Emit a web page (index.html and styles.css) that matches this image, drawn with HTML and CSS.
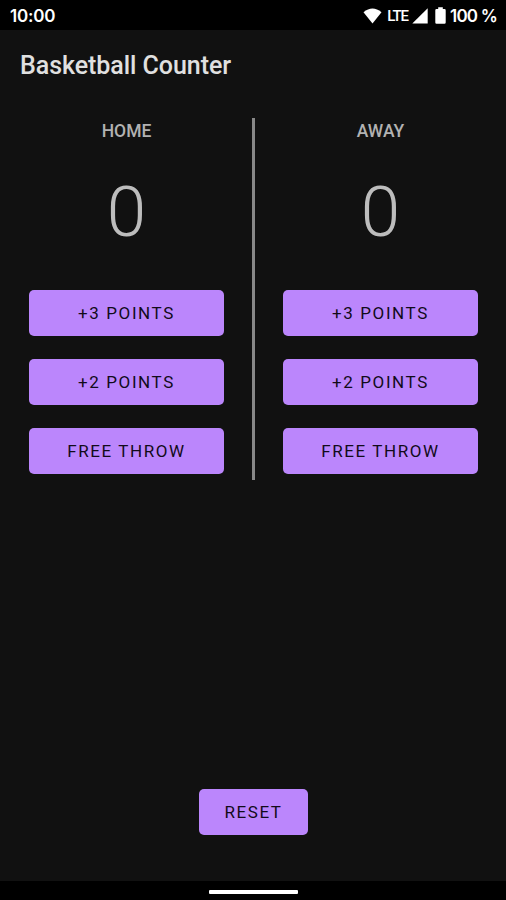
FILE: index.html
```
<!DOCTYPE html>
<html lang="en">
<head>
  <meta charset="UTF-8">
  <meta name="viewport" content="width=device-width, initial-scale=1.0">
  <title>Basketball Counter</title>
  <link rel="stylesheet" href="styles.css">
</head>
<body>

<div class="status-bar">
  <span class="clock">10:00</span>
  <div class="status-icons">
    <svg class="wifi" width="19" height="16" viewBox="0 0 19 16">
      <path d="M0.5 4.3 Q9.5 -3.2 18.5 4.3 L9.5 15.6 Z" fill="#fff"/>
    </svg>
    <span class="lte">LTE</span>
    <svg class="signal" width="16" height="16" viewBox="0 0 16 16">
      <path d="M15.7 0.3 V15.6 H0.3 Z" fill="#fff"/>
    </svg>
    <svg class="battery" width="11" height="17" viewBox="0 0 11 17">
      <path d="M3.2 0.3 H7.8 V2 H9.5 Q10.7 2 10.7 3.2 V15.6 Q10.7 16.8 9.5 16.8 H1.5 Q0.3 16.8 0.3 15.6 V3.2 Q0.3 2 1.5 2 H3.2 Z" fill="#fff"/>
    </svg>
    <span class="percent">100 %</span>
  </div>
</div>

<h1 class="title">Basketball Counter</h1>

<div class="board">
  <div class="team">
    <h2>HOME</h2>
    <div class="score" id="homeScore">0</div>
    <button onclick="addPoints('homeScore', 3)">+3 POINTS</button>
    <button onclick="addPoints('homeScore', 2)">+2 POINTS</button>
    <button onclick="addPoints('homeScore', 1)">FREE THROW</button>
  </div>
  <div class="divider"></div>
  <div class="team">
    <h2>AWAY</h2>
    <div class="score" id="awayScore">0</div>
    <button onclick="addPoints('awayScore', 3)">+3 POINTS</button>
    <button onclick="addPoints('awayScore', 2)">+2 POINTS</button>
    <button onclick="addPoints('awayScore', 1)">FREE THROW</button>
  </div>
</div>

<button class="reset" onclick="resetScores()">RESET</button>

<div class="nav-bar"><div class="nav-handle"></div></div>

<script>
  function addPoints(id, points) {
    const score = document.getElementById(id);
    score.textContent = parseInt(score.textContent) + points;
  }

  function resetScores() {
    document.getElementById('homeScore').textContent = 0;
    document.getElementById('awayScore').textContent = 0;
  }
</script>

</body>
</html>
```
FILE: styles.css
```
* {
  box-sizing: border-box;
}

body {
  font-family: Roboto, sans-serif;
  margin: 0;
  height: 900px;
  display: flex;
  flex-direction: column;
  background-color: #111;
  overflow: hidden;
}

.status-bar {
  display: flex;
  justify-content: space-between;
  align-items: center;
  height: 30px;
  padding: 1px 9px 0 10px;
  background-color: #000;
  color: #fff;
}

.clock,
.percent {
  font-family: Inter, sans-serif;
  font-size: 17px;
  font-weight: 600;
  letter-spacing: -0.2px;
}

.status-icons {
  display: flex;
  align-items: center;
}

.lte {
  margin-left: 5px;
  font-size: 15px;
  font-weight: 500;
  letter-spacing: -1px;
}

.signal {
  margin-left: 4px;
}

.battery {
  margin-left: 7px;
}

.percent {
  margin-left: 4px;
  letter-spacing: -0.8px;
}

.title {
  margin: 20px 0 0 20px;
  font-size: 25px;
  font-weight: 500;
  line-height: 32px;
  letter-spacing: -0.05px;
  color: #e0e0e0;
}

.board {
  display: flex;
  height: 362px;
  margin-top: 36px;
}

.team {
  display: flex;
  flex-direction: column;
  width: 252px;
  padding: 0 28px 0 29px;
}

.divider {
  width: 3px;
  margin-right: -1px;
  background-color: #888;
}

.team h2 {
  margin: 2px 0 0;
  font-size: 17.5px;
  font-weight: 500;
  line-height: 22px;
  text-align: center;
  color: #b2b2b2;
}

.score {
  margin: 27px 0 36px;
  font-size: 71px;
  font-weight: 300;
  line-height: 85px;
  text-align: center;
  color: #bdbdbd;
}

button {
  height: 46px;
  padding: 0;
  background-color: #bb86fc;
  color: #120b1a;
  font-family: Roboto, sans-serif;
  font-size: 17px;
  font-weight: 400;
  letter-spacing: 1.6px;
  border: none;
  border-radius: 5px;
  cursor: pointer;
}

.team button {
  margin-bottom: 23px;
  flex-shrink: 0;
}

.reset {
  width: 109px;
  margin: auto 0 46px 199px;
}

.nav-bar {
  display: flex;
  justify-content: center;
  height: 19px;
  padding-top: 9px;
  background-color: #000;
}

.nav-handle {
  width: 89px;
  height: 4px;
  border-radius: 1px;
  background-color: #fff;
}
```
